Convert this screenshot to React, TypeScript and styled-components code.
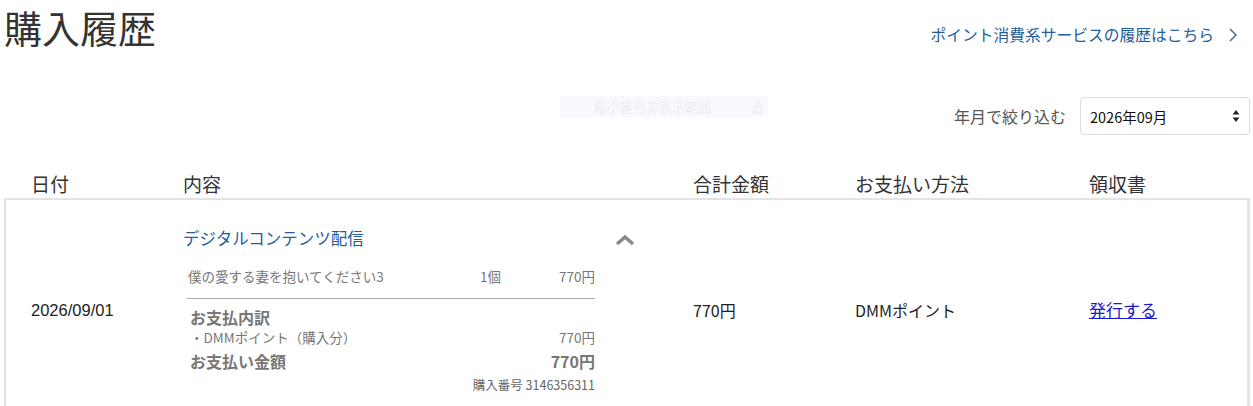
import React from "react";
import styled, { createGlobalStyle } from "styled-components";

const GlobalStyle = createGlobalStyle`
  html, body { margin: 0; padding: 0; background: #fff; }
  body {
    font-family: "Noto Sans CJK JP", "Noto Sans", sans-serif;
    color: #333;
  }
`;

const Page = styled.div`
  width: 1253px;
  padding: 0 3px 0 4px;
  box-sizing: border-box;
`;

const TopBar = styled.div`
  display: flex;
  justify-content: space-between;
  align-items: flex-start;
  height: 86px;
`;

const Title = styled.h1`
  margin: 0;
  padding-top: 1px;
  font-size: 38px;
  line-height: 52px;
  font-weight: 400;
  color: #333;
`;

const HistoryLink = styled.a`
  display: flex;
  align-items: center;
  gap: 14px;
  margin-top: 23px;
  margin-right: 12px;
  font-size: 15.75px;
  line-height: 24px;
  color: #245d9c;
  text-decoration: none;
`;

const Chevron = styled.svg`
  width: 10px;
  height: 16px;
`;

const FilterBar = styled.div`
  position: relative;
  display: flex;
  justify-content: flex-end;
  align-items: center;
  gap: 14px;
  height: 48px;
  margin-top: 6px;
`;

const Ghost = styled.div`
  position: absolute;
  left: 556px;
  top: 4px;
  width: 208px;
  height: 21px;
  background: #f8f9fc;
  color: #eceef3;
  font-size: 13px;
  line-height: 21px;
  display: flex;
  gap: 40px;
  padding-left: 34px;
  box-sizing: border-box;
  white-space: nowrap;
  overflow: hidden;
`;

const FilterLabel = styled.span`
  font-size: 16px;
  color: #555;
`;

const SelectBox = styled.div`
  width: 170px;
  height: 38px;
  box-sizing: border-box;
  border: 1px solid #dcdcdc;
  border-radius: 4px;
  display: flex;
  align-items: center;
  justify-content: space-between;
  padding: 0 9px;
  font-size: 14.5px;
  color: #111;
`;

const Columns = "152px 510px 162px 234px 1fr";

const HeaderRow = styled.div`
  display: grid;
  grid-template-columns: ${Columns};
  padding: 0 0 0 27px;
  margin-top: 30px;
  height: 24px;
  align-items: center;
  font-size: 19px;
  color: #333;
`;

const TableBox = styled.div`
  margin-top: 4px;
  border: 2px solid #e3e3e3;
  border-right-width: 3px;
  border-bottom: none;
`;

const DataRow = styled.div`
  display: grid;
  grid-template-columns: ${Columns};
  padding: 25px 0 24px 25px;
  align-items: center;
`;

const Cell = styled.div`
  font-size: 16px;
  color: #222;
  padding-top: 0;
`;

const DateCell = styled(Cell)`
  font-family: "Liberation Sans", "Noto Sans CJK JP", sans-serif;
  font-size: 16.5px;
  padding-top: 2px;
`;

const ReceiptLink = styled.a`
  font-size: 17px;
  color: #1a1acc;
  text-decoration: underline;
`;

const ContentCell = styled.div`
  display: flex;
  flex-direction: column;
`;

const ContentHead = styled.div`
  display: flex;
  align-items: center;
  width: 452px;
  justify-content: space-between;
`;

const CategoryTitle = styled.div`
  font-size: 16.5px;
  color: #245d9c;
  line-height: 26px;
`;

const CollapseIcon = styled.svg`
  width: 20px;
  height: 12px;
  margin-top: 4px;
`;

const Details = styled.div`
  width: 408px;
  margin-left: 4px;
  margin-top: 15px;
  color: #777;
`;

const ItemRow = styled.div`
  display: grid;
  grid-template-columns: 1fr 60px 55px;
  font-size: 13.5px;
  line-height: 20px;
  padding: 0 0 12px 1px;
  border-bottom: 1px solid #aaa;
`;

const Right = styled.span`
  text-align: right;
`;

const BreakHead = styled.div`
  font-size: 16px;
  font-weight: 700;
  color: #777;
  line-height: 20px;
  margin-top: 8px;
  padding-left: 3px;
`;

const LineRow = styled.div<{ $bold?: boolean }>`
  display: flex;
  justify-content: space-between;
  padding-left: 3px;
  font-size: ${(p) => (p.$bold ? 16 : 13.5)}px;
  font-weight: ${(p) => (p.$bold ? 700 : 400)};
  line-height: ${(p) => (p.$bold ? 29 : 20)}px;
`;

const OrderNo = styled.div`
  text-align: right;
  font-size: 12.5px;
  line-height: 18px;
  color: #666;
`;

export default function App() {
  return (
    <>
      <GlobalStyle />
      <Page>
        <TopBar>
          <Title>購入履歴</Title>
          <HistoryLink href="#">
            ポイント消費系サービスの履歴はこちら
            <Chevron viewBox="0 0 10 16">
              <path d="M2 2 L8 8 L2 14" fill="none" stroke="#4a6e9c" strokeWidth="1.5" />
            </Chevron>
          </HistoryLink>
        </TopBar>
        <FilterBar>
          <Ghost>
            <span>縮小番号非表示範囲</span>
            <span>合</span>
          </Ghost>
          <FilterLabel>年月で絞り込む</FilterLabel>
          <SelectBox>
            <span>2026年09月</span>
            <svg width="8" height="14" viewBox="0 0 8 14">
              <path d="M4 1 L7.5 5.5 L0.5 5.5 Z" fill="#222" />
              <path d="M4 13 L7.5 8.5 L0.5 8.5 Z" fill="#222" />
            </svg>
          </SelectBox>
        </FilterBar>
        <HeaderRow>
          <span>日付</span>
          <span>内容</span>
          <span>合計金額</span>
          <span>お支払い方法</span>
          <span>領収書</span>
        </HeaderRow>
        <TableBox>
          <DataRow>
            <DateCell>2026/09/01</DateCell>
            <ContentCell>
              <ContentHead>
                <CategoryTitle>デジタルコンテンツ配信</CategoryTitle>
                <CollapseIcon viewBox="0 0 20 12">
                  <path d="M2 10 L10 3 L18 10" fill="none" stroke="#8a8a8a" strokeWidth="3.5" />
                </CollapseIcon>
              </ContentHead>
              <Details>
                <ItemRow>
                  <span>僕の愛する妻を抱いてください3</span>
                  <span>1個</span>
                  <Right>770円</Right>
                </ItemRow>
                <BreakHead>お支払内訳</BreakHead>
                <LineRow>
                  <span>・DMMポイント（購入分）</span>
                  <span>770円</span>
                </LineRow>
                <LineRow $bold>
                  <span>お支払い金額</span>
                  <span>770円</span>
                </LineRow>
                <OrderNo>購入番号 3146356311</OrderNo>
              </Details>
            </ContentCell>
            <Cell>770円</Cell>
            <Cell>DMMポイント</Cell>
            <Cell>
              <ReceiptLink href="#">発行する</ReceiptLink>
            </Cell>
          </DataRow>
        </TableBox>
      </Page>
    </>
  );
}
